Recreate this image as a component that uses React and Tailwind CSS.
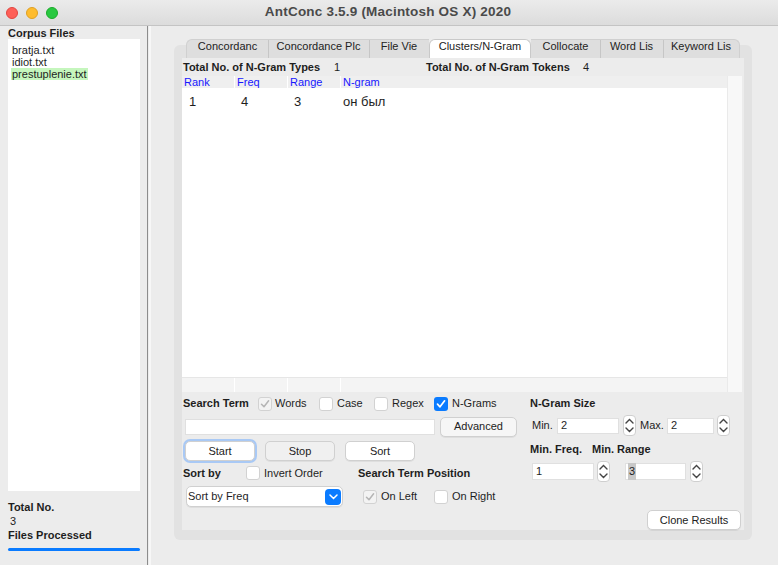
import React from "react";

const files = ["bratja.txt", "idiot.txt", "prestuplenie.txt"];

const tabs = [
  { label: "Concordanc", w: "w-[82px]" },
  { label: "Concordance Plc", w: "w-[101px]" },
  { label: "File Vie", w: "w-[60px]" },
  { label: "Clusters/N-Gram", w: "w-[102px]", active: true },
  { label: "Collocate", w: "w-[69px]" },
  { label: "Word Lis", w: "w-[63px]" },
  { label: "Keyword Lis", w: "w-[77px]" },
];

const Check = ({ state }) => {
  // state: "off" | "disabled" | "on"
  if (state === "on") {
    return (
      <span className="w-[14px] h-[14px] rounded-[3px] bg-[#0a7bff] flex items-center justify-center shrink-0">
        <svg width="10" height="10" viewBox="0 0 10 10">
          <path d="M1.5 5.2 L4 7.8 L8.6 1.8" stroke="white" strokeWidth="1.7" fill="none" strokeLinecap="round" strokeLinejoin="round" />
        </svg>
      </span>
    );
  }
  return (
    <span
      className={`w-[14px] h-[14px] rounded-[3px] border border-[#d2d2d2] flex items-center justify-center shrink-0 ${
        state === "disabled" ? "bg-[#f3f3f3]" : "bg-white"
      }`}
    >
      {state === "disabled" && (
        <svg width="10" height="10" viewBox="0 0 10 10">
          <path d="M1.5 5.2 L4 7.8 L8.6 1.8" stroke="#b5b5b5" strokeWidth="1.5" fill="none" strokeLinecap="round" strokeLinejoin="round" />
        </svg>
      )}
    </span>
  );
};

const Stepper = () => (
  <span className="w-[13px] h-[21px] rounded-[4px] bg-white border border-[#cfcfcf] flex flex-col items-center justify-between py-[2px] shrink-0">
    <svg width="9" height="6" viewBox="0 0 9 6">
      <path d="M1 5 L4.5 1.5 L8 5" stroke="#444" strokeWidth="1.4" fill="none" strokeLinecap="round" />
    </svg>
    <svg width="9" height="6" viewBox="0 0 9 6">
      <path d="M1 1 L4.5 4.5 L8 1" stroke="#444" strokeWidth="1.4" fill="none" strokeLinecap="round" />
    </svg>
  </span>
);

const Btn = ({ children, className = "" }) => (
  <span
    className={`h-[20px] rounded-[5px] border border-[#d0d0d0] flex items-center justify-center text-[11px] text-[#222] shadow-[0_1px_0_rgba(0,0,0,0.06)] ${className}`}
  >
    {children}
  </span>
);

export default function App() {
  return (
    <div className="w-[778px] h-[565px] bg-[#ececec] flex flex-col overflow-hidden font-['Liberation_Sans',Arial,sans-serif] text-[#1e1e1e]">
      {/* title bar */}
      <div className="h-[26px] shrink-0 flex items-center border-b border-[#c4c4c4] bg-gradient-to-b from-[#ebebeb] to-[#dcdcdc]">
        <div className="flex gap-[8px] pl-[6px]">
          <span className="w-[12px] h-[12px] rounded-full bg-[#fe5f57] border border-[#e14640]" />
          <span className="w-[12px] h-[12px] rounded-full bg-[#febc2e] border border-[#dfa023]" />
          <span className="w-[12px] h-[12px] rounded-full bg-[#28c840] border border-[#1aab29]" />
        </div>
        <div className="flex-1 text-center pr-[60px] text-[13.5px] font-bold text-[#4a4a4a] tracking-[0.2px]">
          AntConc 3.5.9 (Macintosh OS X) 2020
        </div>
      </div>

      <div className="flex flex-1 min-h-0">
        {/* left pane */}
        <div className="w-[148px] shrink-0 flex flex-col px-[8px] pt-[1px] border-r border-[#8c8c8c]">
          <div className="text-[11px] font-bold leading-[12px] h-[12px]">Corpus Files</div>
          <div className="h-[452px] bg-white pt-[5px] pl-[3px] mr-[-1px]">
            {files.map((f, i) => (
              <div key={f} className="text-[11px] leading-[12px]">
                <span className={i === 2 ? "bg-[#c5f6bd] px-[1px]" : "px-[1px]"}>{f}</span>
              </div>
            ))}
          </div>
          <div className="text-[11px] font-bold leading-[14px] mt-[9px]">Total No.</div>
          <div className="text-[11px] leading-[14px] pl-[2px]">3</div>
          <div className="text-[11px] font-bold leading-[14px]">Files Processed</div>
          <div className="h-[3px] rounded-full bg-[#0a7bff] mt-[6px] mr-[-1px]" />
        </div>
        <div className="w-[3px] shrink-0 border-r-2 border-[#f7f7f7]" />

        {/* right pane */}
        <div className="flex-1 pl-[23px] pt-[19px]">
          <div className="w-[578px] h-[495px] rounded-[6px] bg-[#e2e2e2] flex flex-col">
            {/* tab row */}
            <div className="-mt-[6px] ml-[12px] h-[19px] flex">
              {tabs.map((t, i) => (
                <div
                  key={t.label}
                  className={`${t.w} h-[19px] flex items-start leading-[13px] justify-center text-[11px] overflow-hidden whitespace-nowrap ${
                    t.active
                      ? "bg-white rounded-t-[6px] border border-b-0 border-[#c9c9c9] text-[#222]"
                      : `bg-[#dedede] border-t border-[#d0d0d0] text-[#222] ${i === 0 ? "rounded-tl-[6px] border-l" : ""} ${
                          i === tabs.length - 1 ? "rounded-tr-[6px] border-r" : ""
                        } ${i > 0 && !tabs[i - 1].active ? "shadow-[inset_1px_0_0_#c6c6c6]" : ""}`
                  }`}
                >
                  {t.label}
                </div>
              ))}
            </div>

            {/* inner content */}
            <div className="mx-[8px] h-[472px] bg-[#ececec] flex flex-col">
              <div className="h-[18px] flex items-center text-[11px] pl-[1px]">
                <span className="font-bold w-[151px]">Total No. of N-Gram Types</span>
                <span className="w-[92px]">1</span>
                <span className="font-bold w-[157px]">Total No. of N-Gram Tokens</span>
                <span>4</span>
              </div>

              {/* table */}
              <div className="flex h-[316px]">
                <div className="w-[545px] bg-white flex flex-col">
                  <div className="grid grid-cols-[52px_52px_52px_1fr] gap-x-[1px] h-[12px] text-[11px] leading-[12px] text-[#1717ff]">
                    <div className="bg-[#efefef] pl-[2px]">Rank</div>
                    <div className="bg-[#efefef] pl-[2px]">Freq</div>
                    <div className="bg-[#efefef] pl-[2px]">Range</div>
                    <div className="bg-[#efefef] pl-[2px]">N-gram</div>
                  </div>
                  <div className="grid grid-cols-[52px_52px_52px_1fr] gap-x-[1px] mt-[6px] h-[16px] text-[13px] leading-[16px]">
                    <div className="pl-[7px]">1</div>
                    <div className="pl-[6px]">4</div>
                    <div className="pl-[6px]">3</div>
                    <div className="pl-[2px]">он был</div>
                  </div>
                  <div className="flex-1" />
                  <div className="grid grid-cols-[52px_52px_52px_1fr] gap-x-[1px] h-[15px] border-t border-[#e6e6e6]">
                    <div className="bg-[#f4f4f4]" />
                    <div className="bg-[#f4f4f4]" />
                    <div className="bg-[#f4f4f4]" />
                    <div className="bg-[#f4f4f4]" />
                  </div>
                </div>
                <div className="w-[15px] bg-[#f8f8f8] border-l border-[#eaeaea]" />
              </div>

              {/* controls */}
              <div className="flex mt-[3px]">
                <div className="w-[348px] flex flex-col text-[11px]">
                  <div className="h-[17px] flex items-center">
                    <span className="font-bold w-[76px] pl-[1px]">Search Term</span>
                    <span className="w-[61px] flex items-center gap-[3px]">
                      <Check state="disabled" /> Words
                    </span>
                    <span className="w-[55px] flex items-center gap-[4px]">
                      <Check state="off" /> Case
                    </span>
                    <span className="w-[60px] flex items-center gap-[4px]">
                      <Check state="off" /> Regex
                    </span>
                    <span className="flex items-center gap-[4px]">
                      <Check state="on" /> N-Grams
                    </span>
                  </div>
                  <div className="flex items-center mt-[5px] pl-[3px] h-[19px]">
                    <span className="w-[250px] h-[16px] bg-white border border-[#e0e0e0]" />
                    <Btn className="ml-[5px] w-[77px] h-[19px] bg-[#f6f6f6]">Advanced</Btn>
                  </div>
                  <div className="flex items-center mt-[5px] pl-[3px] gap-[10px]">
                    <Btn className="w-[70px] bg-white border-[#87b4ee] ring-2 ring-[#a9c9f5]">Start</Btn>
                    <Btn className="w-[70px] bg-[#f0f0f0]">Stop</Btn>
                    <Btn className="w-[70px] bg-white">Sort</Btn>
                  </div>
                  <div className="h-[16px] flex items-center mt-[4px]">
                    <span className="font-bold w-[64px] pl-[1px]">Sort by</span>
                    <span className="w-[112px] flex items-center gap-[4px]">
                      <Check state="off" /> Invert Order
                    </span>
                    <span className="font-bold">Search Term Position</span>
                  </div>
                  <div className="flex items-center mt-[5px]">
                    <span className="ml-[4px] w-[157px] h-[21px] bg-white rounded-[5px] border border-[#d0d0d0] flex items-center pl-[1px] pr-[1px] shadow-[0_1px_0_rgba(0,0,0,0.06)]">
                      <span className="flex-1">Sort by Freq</span>
                      <span className="w-[16px] h-[16px] rounded-[4px] bg-[#0a7bff] flex items-center justify-center">
                        <svg width="9" height="6" viewBox="0 0 9 6">
                          <path d="M1 1 L4.5 4.5 L8 1" stroke="white" strokeWidth="1.5" fill="none" strokeLinecap="round" />
                        </svg>
                      </span>
                    </span>
                    <span className="ml-[20px] w-[71px] flex items-center gap-[4px]">
                      <Check state="disabled" /> On Left
                    </span>
                    <span className="flex items-center gap-[4px]">
                      <Check state="off" /> On Right
                    </span>
                  </div>
                </div>

                <div className="flex-1 flex flex-col text-[11px]">
                  <div className="h-[17px] flex items-center font-bold">N-Gram Size</div>
                  <div className="flex items-center mt-[3px] h-[21px]">
                    <span className="w-[27px] pl-[2px]">Min.</span>
                    <span className="w-[62px] h-[16px] bg-white border border-[#e0e0e0] flex items-center pl-[3px]">2</span>
                    <span className="ml-[4px]"><Stepper /></span>
                    <span className="w-[31px] pl-[4px]">Max.</span>
                    <span className="w-[47px] h-[16px] bg-white border border-[#e0e0e0] flex items-center pl-[3px]">2</span>
                    <span className="ml-[3px]"><Stepper /></span>
                  </div>
                  <div className="h-[16px] flex items-center font-bold mt-[5px]">
                    <span className="w-[62px]">Min. Freq.</span>
                    <span>Min. Range</span>
                  </div>
                  <div className="flex items-center mt-[4px] h-[21px]">
                    <span className="ml-[2px] w-[62px] h-[17px] bg-white border border-[#e0e0e0] flex items-center pl-[3px]">1</span>
                    <span className="ml-[3px]"><Stepper /></span>
                    <span className="ml-[15px] w-[61px] h-[17px] bg-white border border-[#e0e0e0] flex items-center pl-[2px]">
                      <span className="bg-[#c8c8c8] px-[1px]">3</span>
                    </span>
                    <span className="ml-[4px]"><Stepper /></span>
                  </div>
                  <div className="flex justify-end mt-[28px] pr-[3px]">
                    <Btn className="w-[94px] bg-white">Clone Results</Btn>
                  </div>
                </div>
              </div>
            </div>
          </div>
        </div>
      </div>
    </div>
  );
}
